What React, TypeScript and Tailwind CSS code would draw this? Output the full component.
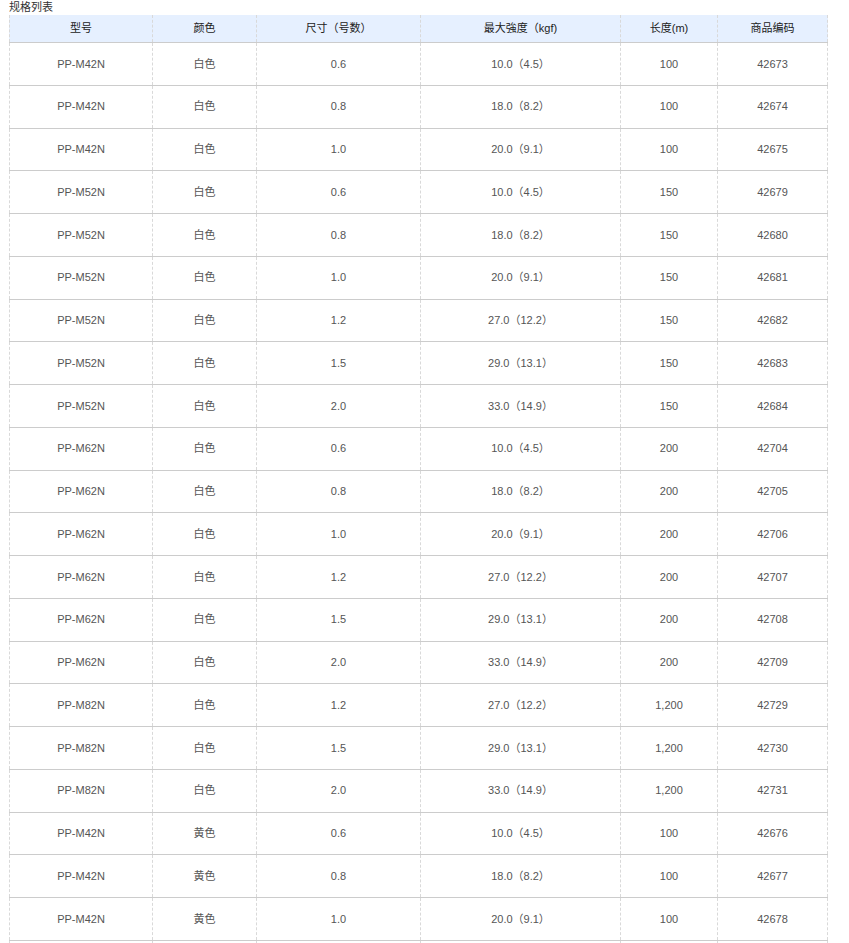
const rows: string[][] = [
  ['PP-M42N', '白色', '0.6', '10.0（4.5）', '100', '42673'],
  ['PP-M42N', '白色', '0.8', '18.0（8.2）', '100', '42674'],
  ['PP-M42N', '白色', '1.0', '20.0（9.1）', '100', '42675'],
  ['PP-M52N', '白色', '0.6', '10.0（4.5）', '150', '42679'],
  ['PP-M52N', '白色', '0.8', '18.0（8.2）', '150', '42680'],
  ['PP-M52N', '白色', '1.0', '20.0（9.1）', '150', '42681'],
  ['PP-M52N', '白色', '1.2', '27.0（12.2）', '150', '42682'],
  ['PP-M52N', '白色', '1.5', '29.0（13.1）', '150', '42683'],
  ['PP-M52N', '白色', '2.0', '33.0（14.9）', '150', '42684'],
  ['PP-M62N', '白色', '0.6', '10.0（4.5）', '200', '42704'],
  ['PP-M62N', '白色', '0.8', '18.0（8.2）', '200', '42705'],
  ['PP-M62N', '白色', '1.0', '20.0（9.1）', '200', '42706'],
  ['PP-M62N', '白色', '1.2', '27.0（12.2）', '200', '42707'],
  ['PP-M62N', '白色', '1.5', '29.0（13.1）', '200', '42708'],
  ['PP-M62N', '白色', '2.0', '33.0（14.9）', '200', '42709'],
  ['PP-M82N', '白色', '1.2', '27.0（12.2）', '1,200', '42729'],
  ['PP-M82N', '白色', '1.5', '29.0（13.1）', '1,200', '42730'],
  ['PP-M82N', '白色', '2.0', '33.0（14.9）', '1,200', '42731'],
  ['PP-M42N', '黄色', '0.6', '10.0（4.5）', '100', '42676'],
  ['PP-M42N', '黄色', '0.8', '18.0（8.2）', '100', '42677'],
  ['PP-M42N', '黄色', '1.0', '20.0（9.1）', '100', '42678'],
  // next row only shows its top edge in the window
  ['', '', '', '', '', ''],
];

const headers = ['型号', '颜色', '尺寸（号数）', '最大強度（kgf)', '长度(m)', '商品编码'];

const widths = ['w-[143px]', 'w-[104px]', 'w-[164px]', 'w-[200px]', 'w-[97px]', 'w-[111px]'];

function Cell({ text, i, head }: { text: string; i: number; head?: boolean }) {
  return (
    <div
      className={`flex shrink-0 items-center justify-center border-l border-dashed border-l-[#d9d9d9] ${
        widths[i]
      } ${i === 5 ? 'border-r border-r-[#d9d9d9]' : ''} ${head ? 'text-[#222]' : 'text-[#555]'}`}
    >
      {text}
    </div>
  );
}

export default function App() {
  return (
    <div className="h-[943px] overflow-hidden bg-white font-['Liberation_Sans','Noto_Sans_CJK_SC',sans-serif] text-[11px]">
      <div className="h-[15px] pl-[9px] leading-[15px] text-[#333]">规格列表</div>
      <div className="ml-[9px] flex w-[819px] flex-col">
        <div className="flex h-[28px] border-b border-[#cccccc] bg-[#e6f0ff]">
          {headers.map((h, i) => (
            <Cell key={i} text={h} i={i} head />
          ))}
        </div>
        {rows.map((r, ri) => (
          <div key={ri} className="flex h-[42.75px] shrink-0 border-b border-[#cccccc]">
            {r.map((c, i) => (
              <Cell key={i} text={c} i={i} />
            ))}
          </div>
        ))}
      </div>
    </div>
  );
}
